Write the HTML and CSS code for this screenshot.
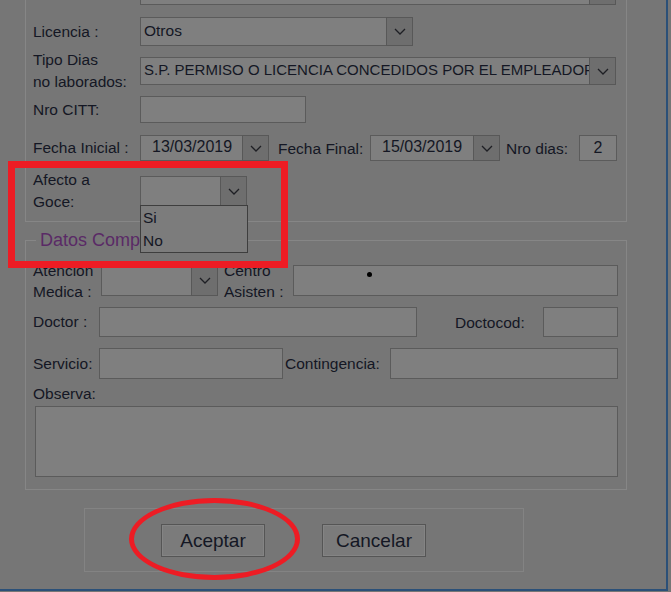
FILE: index.html
```html
<!DOCTYPE html>
<html lang="es">
<head>
<meta charset="utf-8">
<title>Licencia</title>
<link rel="stylesheet" href="styles.css">
</head>
<body>
<div class="window">
  <div class="group g1">
    <div class="row r0">
      <span class="lbl"></span>
      <div class="field select w476"><span class="val"></span><span class="drop"><svg width="12" height="7" viewBox="0 0 12 7"><polyline points="1,1 6,6 11,1"/></svg></span></div>
    </div>
    <div class="row r1">
      <span class="lbl">Licencia :</span>
      <div class="field select w273"><span class="val">Otros</span><span class="drop"><svg width="12" height="7" viewBox="0 0 12 7"><polyline points="1,1 6,6 11,1"/></svg></span></div>
    </div>
    <div class="row r2">
      <span class="lbl">Tipo Dias<br>no laborados:</span>
      <div class="field select w476"><span class="val long">S.P. PERMISO O LICENCIA CONCEDIDOS POR EL EMPLEADOR</span><span class="drop"><svg width="12" height="7" viewBox="0 0 12 7"><polyline points="1,1 6,6 11,1"/></svg></span></div>
    </div>
    <div class="row r3">
      <span class="lbl">Nro CITT:</span>
      <div class="field w166"></div>
    </div>
    <div class="row r4">
      <span class="lbl">Fecha Inicial :</span>
      <div class="field select date w129"><span class="val">13/03/2019</span><span class="drop"><svg width="12" height="7" viewBox="0 0 12 7"><polyline points="1,1 6,6 11,1"/></svg></span></div>
      <span class="lbl2 ff">Fecha Final:</span>
      <div class="field select date w130"><span class="val">15/03/2019</span><span class="drop"><svg width="12" height="7" viewBox="0 0 12 7"><polyline points="1,1 6,6 11,1"/></svg></span></div>
      <span class="lbl2 nd">Nro dias:</span>
      <div class="field num w38">2</div>
    </div>
    <div class="row r5">
      <span class="lbl">Afecto a<br>Goce:</span>
      <div class="field select w107 open">
        <span class="val"></span><span class="drop"><svg width="12" height="7" viewBox="0 0 12 7"><polyline points="1,1 6,6 11,1"/></svg></span>
        <ul class="list">
          <li>Si</li>
          <li>No</li>
        </ul>
      </div>
    </div>
  </div>

  <fieldset class="group g2">
    <legend>Datos Complementarios</legend>
    <div class="row ra">
      <span class="lbl la">Atencion<br>Medica :</span>
      <div class="field select w117"><span class="val"></span><span class="drop"><svg width="12" height="7" viewBox="0 0 12 7"><polyline points="1,1 6,6 11,1"/></svg></span></div>
      <span class="lbl2 ca">Centro<br>Asisten :</span>
      <div class="field w325"><span class="dot"></span></div>
    </div>
    <div class="row rb">
      <span class="lbl lb">Doctor :</span>
      <div class="field w318"></div>
      <span class="lbl2 dc">Doctocod:</span>
      <div class="field w75"></div>
    </div>
    <div class="row rc">
      <span class="lbl lb">Servicio:</span>
      <div class="field w184"></div>
      <span class="lbl2 ct">Contingencia:</span>
      <div class="field w228"></div>
    </div>
    <div class="obs-label">Observa:</div>
    <div class="field textarea"></div>
  </fieldset>

  <div class="actions">
    <button class="btn" type="button">Aceptar</button>
    <button class="btn" type="button">Cancelar</button>
  </div>
</div>

<div class="mark-rect"></div>
<div class="mark-ellipse"></div>
</body>
</html>
```

FILE: styles.css
```css
* { box-sizing: border-box; }

html, body {
  margin: 0;
  background: #767676;
}

body {
  width: 671px;
  height: 592px;
  overflow: hidden;
  position: relative;
  font-family: "Liberation Sans", Arial, sans-serif;
  font-size: 15.5px;
  color: #141724;
}

.window {
  width: 668px;
  height: 591px;
  border-right: 2px solid #2b5078;
  border-bottom: 2px solid #2b5078;
  padding-left: 25px;
  overflow: hidden;
}

.group {
  width: 602px;
  border: 1px solid #868686;
  margin: 0;
}

.g1 {
  margin-top: -30px;
  padding: 6px 0 15px 7px;
}

.row {
  display: flex;
  align-items: center;
}

.lbl {
  width: 107px;
  flex: none;
  line-height: 22px;
  white-space: nowrap;
}

.lbl2 {
  flex: none;
  line-height: 21px;
  white-space: nowrap;
}

.r0 { height: 28px; }
.r1 { height: 29px; margin-top: 12px; }
.r2 { height: 28px; margin-top: 11px; }
.r3 { height: 27px; margin-top: 11px; }
.r4 { height: 26px; margin-top: 12px; }
.r5 { height: 30px; margin-top: 15px; }

.field {
  flex: none;
  height: 100%;
  background: #7f7f7f;
  border: 1px solid #5b5b5b;
  display: flex;
  align-items: center;
  position: relative;
}

.select .val {
  flex: 1;
  min-width: 0;
  overflow: hidden;
  white-space: nowrap;
  padding-left: 3px;
  padding-bottom: 2px;
  font-size: 15.5px;
  line-height: 20px;
}

.select .val.long {
  font-size: 15px;
}

.drop {
  flex: none;
  width: 27px;
  height: calc(100% + 2px);
  margin: -1px -1px -1px 0;
  background: #6e6e6e;
  border: 1px solid #585858;
  display: flex;
  align-items: center;
  justify-content: center;
}

.drop svg polyline {
  fill: none;
  stroke: #1e1f24;
  stroke-width: 1.3;
}

.date .val {
  padding-left: 11px;
  font-size: 16px;
}

.num {
  justify-content: center;
  font-size: 16px;
}

.w476 { width: 476px; }
.w273 { width: 273px; }
.w166 { width: 166px; }
.w129 { width: 129px; }
.w130 { width: 130px; }
.w38  { width: 38px; }
.w107 { width: 107px; }
.w117 { width: 117px; }
.w325 { width: 325px; }
.w318 { width: 318px; }
.w75  { width: 75px; }
.w184 { width: 184px; }
.w228 { width: 228px; }

.ff { margin-left: 9px; width: 92px; }
.nd { margin-left: 6px; width: 73px; }

.open .list {
  position: absolute;
  top: 100%;
  left: -1px;
  width: 108px;
  margin: 0;
  padding: 0;
  list-style: none;
  background: #7c7c7c;
  border: 1px solid #3e3e3e;
  z-index: 5;
}

.list li {
  height: 23px;
  line-height: 23px;
  padding-left: 2px;
}

/* second group */
.g2 {
  margin-top: 8px;
  padding: 15px 0 12px 7px;
  min-inline-size: 0;
}

.g2 legend {
  font-size: 18px;
  line-height: 20px;
  color: #5a2a66;
  padding: 0 4px;
  margin-left: 3px;
}

.ra { height: 31px; }
.rb { height: 30px; margin-top: 11px; }
.rc { height: 31px; margin-top: 11px; }

.la { width: 68px; line-height: 21px; }
.lb { width: 66px; }
.ca { margin-left: 6px; width: 69px; }
.dc { margin-left: 38px; width: 88px; }
.ct { margin-left: 2px; width: 105px; }

.dot {
  position: absolute;
  left: 73px;
  top: 6px;
  width: 5px;
  height: 5px;
  border-radius: 50%;
  background: #000;
}

.obs-label {
  margin-top: 6px;
  line-height: 18px;
}

.textarea {
  margin-top: 3px;
  margin-left: 2px;
  width: 583px;
  height: 71px;
}

/* buttons */
.actions {
  margin-top: 18px;
  margin-left: 59px;
  width: 440px;
  height: 64px;
  border: 1px solid #838383;
  padding: 15px 0 0 76px;
  display: flex;
  align-items: flex-start;
  gap: 57px;
}

.btn {
  width: 104px;
  height: 33px;
  background: #7b7b7b;
  border: 1px solid #555;
  box-shadow: inset 0 0 0 1px #848484;
  font-family: "Liberation Sans", Arial, sans-serif;
  font-size: 19px;
  color: #141724;
  padding: 0;
}

/* annotations */
.mark-rect {
  position: absolute;
  left: 8px;
  top: 161px;
  width: 280px;
  height: 107px;
  border: 7px solid #ed1c24;
  z-index: 10;
}

.mark-ellipse {
  position: absolute;
  left: 129px;
  top: 498px;
  width: 171px;
  height: 82px;
  border: 5px solid #ed1c24;
  border-radius: 50%;
  z-index: 10;
}
```
